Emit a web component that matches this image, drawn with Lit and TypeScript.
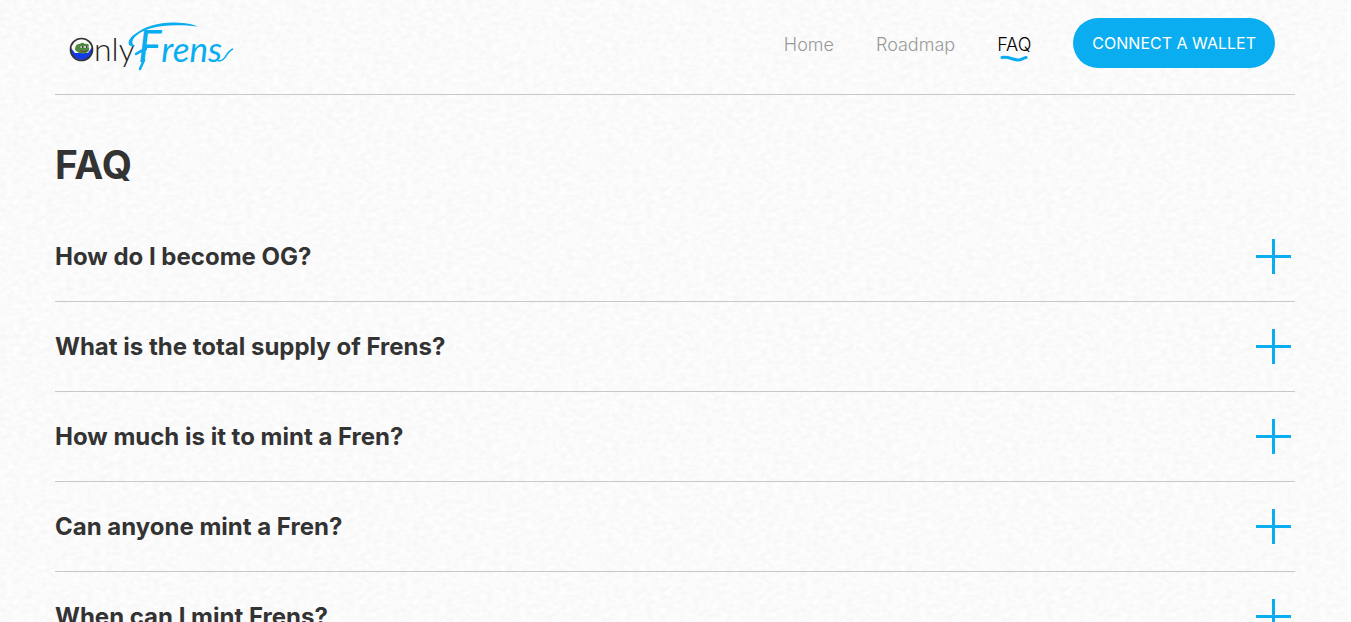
import { LitElement, html, css, svg } from "lit";
import { customElement, property } from "lit/decorators.js";

const logo = svg`
  <svg class="logo" width="172" height="60" viewBox="0 0 172 60" role="img" aria-label="OnlyFrens">
    <path d="M5 30 L9 35 H22 L26 29 L27 33 Q25 39 21 41 Q15 43.500 9 40 Q4 36 5 30Z" fill="#1238e8"/>
    <path d="M9 32 Q9 25 14 26 Q16 23.500 19 26 Q23 25 23 29 Q24 34 20 35 Q14 37 9 32Z" fill="#4d8a3d"/>
    <path d="M14.500 29 H22.500" stroke="#e8e8e8" stroke-width="1.6"/>
    <path d="M16 29 H17.500 M20 29 H21.500" stroke="#111" stroke-width="1.6"/>
    <path d="M14 33 Q18 34 21.500 32.500" fill="none" stroke="#7a4a30" stroke-width="1.2"/>
    <circle cx="15.500" cy="31.500" r="11" fill="none" stroke="#333" stroke-width="1.7"/>
    <text class="only" x="28" y="43">nly</text>
    <path d="M69 28 C61 30 60 22 69 16 C79 8 94 4 109 4.500 C119 5 127 6 132 8.500 C112 6.500 98 7 86 10 C73 13 61 23 69 28Z" fill="#0aadef"/>
    <text class="frens" x="72" y="44"><tspan class="initial">F</tspan>rens</text>
    <path d="M152 43 C161 43 159 34 167 31" fill="none" stroke="#0aadef" stroke-width="1.5"/>
    <path d="M70 36 Q74 33 80 31 M78 42 L74 51" fill="none" stroke="#0aadef" stroke-width="2.500" stroke-linecap="round"/>
  </svg>`;

@customElement("faq-item")
export class FaqItem extends LitElement {
  @property() question = "";

  static styles = css`
    :host { display: block; border-bottom: 1px solid #c8c8c8; }
    .heading { margin: 0; }
    .toggle {
      display: flex;
      align-items: center;
      justify-content: space-between;
      width: 100%;
      padding: 27px 4px 27px 0;
      border: 0;
      background: none;
      color: #333;
      font: 700 24px/35px Inter, sans-serif;
      text-align: left;
      cursor: pointer;
    }
    .plus { flex: none; display: block; }
  `;

  render() {
    return html`
      <h2 class="heading">
        <button class="toggle" type="button" aria-expanded="false">
          <span>${this.question}</span>
          <svg class="plus" width="35" height="35" viewBox="0 0 35 35" aria-hidden="true">
            <path d="M17.500 0V35M0 17.500H35" stroke="#0aadef" stroke-width="3" />
          </svg>
        </button>
      </h2>`;
  }
}

@customElement("app-root")
export class AppRoot extends LitElement {
  private links = ["Home", "Roadmap", "FAQ"];
  private questions = [
    "How do I become OG?",
    "What is the total supply of Frens?",
    "How much is it to mint a Fren?",
    "Can anyone mint a Fren?",
    "When can I mint Frens?",
  ];

  static styles = css`
    :host {
      display: block;
      height: 100vh;
      overflow-y: auto;
      scrollbar-width: none;
      background: #fff;
      font-family: Inter, sans-serif;
      color: #333;
    }
    .page {
      margin-right: 3px;
      padding: 0 53px 0 55px;
      background: #fafafa url("data:image/svg+xml,%3Csvg xmlns='http://www.w3.org/2000/svg' width='400' height='400'%3E%3Cfilter id='n' x='0' y='0' width='100%25' height='100%25' color-interpolation-filters='sRGB'%3E%3CfeTurbulence type='fractalNoise' baseFrequency='.15 .23' numOctaves='3' seed='4' stitchTiles='stitch'/%3E%3CfeColorMatrix values='.05 0 0 0 .957 .05 0 0 0 .957 .05 0 0 0 .957 0 0 0 0 1'/%3E%3C/filter%3E%3Crect width='400' height='400' filter='url(%23n)'/%3E%3C/svg%3E");
    }
    .header {
      display: flex;
      align-items: center;
      justify-content: space-between;
      padding: 18px 20px 26px 11px;
      border-bottom: 1px solid #c8c8c8;
    }
    .brand { display: flex; }
    .logo { display: block; margin-bottom: -10px; overflow: visible; }
    .only { font: 300 32px Lato, sans-serif; fill: #222; }
    .frens { font: italic 400 35px Lato, sans-serif; fill: #0aadef; }
    .initial { font-size: 44px; }
    .nav { display: flex; align-items: center; gap: 42px; }
    .link {
      position: relative;
      padding-top: 4px;
      color: #999;
      font-size: 18px;
      font-weight: 300;
      line-height: 26px;
      text-decoration: none;
    }
    .current { color: #000; }
    .squiggle { position: absolute; left: 3px; top: 27px; }
    .wallet {
      height: 50px;
      padding: 0 19px;
      border: 0;
      border-radius: 25px;
      background: #0aadef;
      color: #fff;
      font: 400 16px Inter, sans-serif;
      cursor: pointer;
    }
    .title { margin: 0; padding: 44px 0 21px; font-size: 39px; font-weight: 700; line-height: 52px; }
  `;

  render() {
    return html`
      <div class="page">
        <header class="header">
          <a class="brand" href="#home">${logo}</a>
          <nav class="nav" aria-label="Main">
            ${this.links.map((label) => {
              const current = label === "FAQ";
              return html`<a class="link ${current ? "current" : ""}" href="#${label.toLowerCase()}">${label}${current
                ? html`<svg class="squiggle" width="28" height="8" viewBox="0 0 28 8" aria-hidden="true">
                    <path d="M2 2.500 C9 1.500 13 5 18 5 C22 5 23 3 26 2.500" fill="none" stroke="#0aadef" stroke-width="3" stroke-linecap="round" />
                  </svg>`
                : ""}</a>`;
            })}
            <button class="wallet" type="button">CONNECT A WALLET</button>
          </nav>
        </header>
        <main>
          <h1 class="title">FAQ</h1>
          ${this.questions.map((q) => html`<faq-item .question=${q}></faq-item>`)}
        </main>
      </div>`;
  }
}
